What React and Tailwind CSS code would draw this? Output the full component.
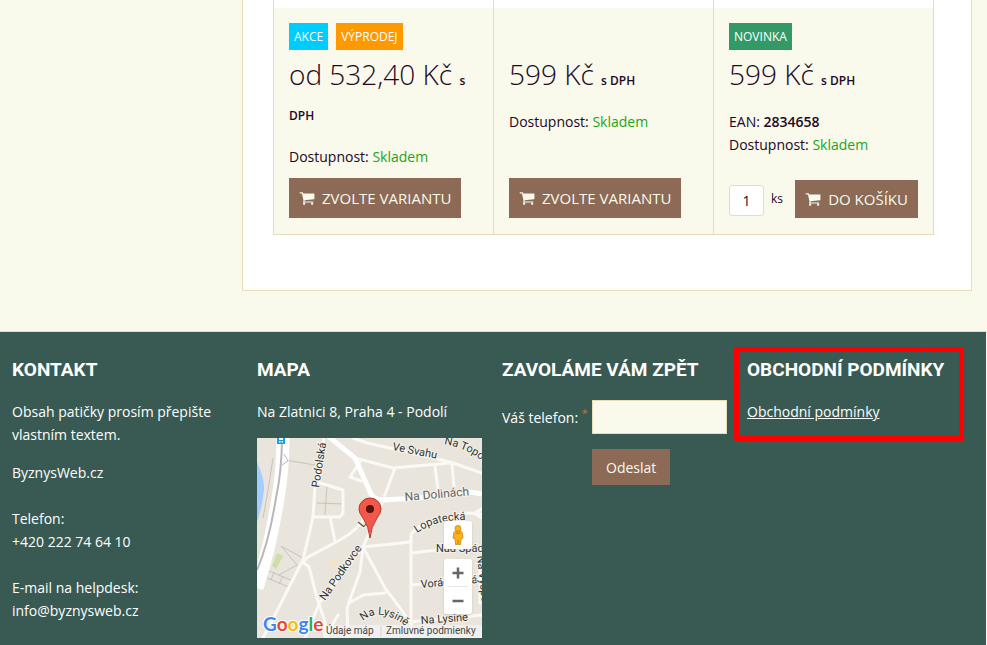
const products = [
  {
    id: 1,
    badges: [
      { label: 'AKCE', className: 'bg-[#00ccff]' },
      { label: 'VÝPRODEJ', className: 'bg-[#ff9900]' },
    ],
    price: 'od 532,40 Kč',
    hasVariants: true,
  },
  { id: 2, badges: [], price: '599 Kč', hasVariants: true },
  {
    id: 3,
    badges: [{ label: 'NOVINKA', className: 'bg-[#339966]' }],
    price: '599 Kč',
    ean: '2834658',
    hasVariants: false,
  },
]

const CartIcon = () => (
  <svg className="w-4 h-4 shrink-0" viewBox="0 0 1792 1792" fill="currentColor" aria-hidden="true">
    <path d="M704 1536q0 52-38 90t-90 38-90-38-38-90 38-90 90-38 90 38 38 90zm896 0q0 52-38 90t-90 38-90-38-38-90 38-90 90-38 90 38 38 90zm128-1088v512q0 24-16.500 42.500t-40.500 21.500l-1044 122q13 60 13 70 0 16-24 64h920q26 0 45 19t19 45-19 45-45 19h-1024q-26 0-45-19t-19-45q0-11 8-31.500t16-36 21.500-40 15.500-29.500l-177-823h-204q-26 0-45-19t-19-45 19-45 45-19h256q16 0 28.500 6.500t19.500 15.500 13 24.500 8 26 5.500 29.500 4.500 26h1201q26 0 45 19t19 45z" />
  </svg>
)

const ProductCard = ({ product }) => (
  <div className="flex flex-col border-r border-b border-[#e8dcb9] pt-2 bg-white">
    <div className="flex-1 flex flex-col bg-[#f9f9ec] px-[15px] pt-[15px] pb-4">
      <div className="flex gap-2 h-[27px] mb-[7px]">
        {product.badges.map((badge) => (
          <span key={badge.label} className={`px-[5px] text-xs leading-[27px] text-white ${badge.className}`}>
            {badge.label}
          </span>
        ))}
      </div>

      <p className="text-[28px] leading-[35px] font-light mb-[18px]">
        {product.price} <span className="text-xs font-semibold">s DPH</span>
      </p>

      <div className="mb-[10px]">
        {product.ean && (
          <p>
            EAN: <strong className="font-semibold">{product.ean}</strong>
          </p>
        )}
        <p>
          Dostupnost: <span className="text-[#1ba61b]">Skladem</span>
        </p>
      </div>

      {product.hasVariants ? (
        <button
          type="button"
          className="mt-auto self-start flex items-center gap-[7px] h-10 px-[10px] bg-[#8c6a56] text-[#f9f9ec] text-[15px]"
        >
          <CartIcon />
          ZVOLTE VARIANTU
        </button>
      ) : (
        <div className="mt-auto flex items-center justify-between">
          <label className="flex items-center gap-[7px] text-xs">
            <input
              type="text"
              defaultValue="1"
              className="w-[35px] h-[31px] mt-[3px] border border-[#e8dcb9] rounded-[3px] bg-white text-center text-sm"
            />
            ks
          </label>
          <button
            type="button"
            className="flex items-center gap-[7px] h-[38px] px-[10px] bg-[#8c6a56] text-[#f9f9ec] text-[15px]"
          >
            <CartIcon />
            DO KOŠÍKU
          </button>
        </div>
      )}
    </div>
  </div>
)

const MapView = () => (
  <div className="relative w-[225px] h-[200px] overflow-hidden bg-[#e9e5dc]">
    <svg className="w-full h-full" viewBox="0 0 225 200" fontFamily="Roboto, sans-serif">
      {/* Water and park */}
      <path d="M0 24Q8 42 7 52Q5 70 0 84z" fill="#a3ccff" />
      <path d="M15 128L20 115L26 118L19 131z" fill="#cadfaa" />
      <circle cx="77" cy="125" r="4" fill="#f3e4c8" />

      {/* Footpaths */}
      <g fill="none" stroke="#c9c4ba" strokeWidth="1">
        <path d="M28 22L58 27M24 10Q25 20 29 22Q34 25 24 33" />
        <path d="M60 65L86 66M70 48L68 77" />
        <path d="M24 108L40 127L22 137M24 108L46 120M12 133L36 143M10 140L32 149M17 134L14 142M26 138L22 146M36 143L32 149" />
        <path d="M16 20Q10 60 6 80" />
      </g>

      {/* Streets */}
      <g fill="none" stroke="#fbf9f5" strokeWidth="3" strokeLinejoin="round" strokeLinecap="round">
        <path d="M67 0L58 49L56 79L46 122L6 200" />
        <path d="M60 44L86 52L86 75L83 79L56 79M73 79L78 103" />
        <path d="M115 68Q105 90 83 102L51 119L46 124L52 129L60 160L68 184V200" />
        <path d="M96 0L110 5L133 10L173 19L196 25L225 35" />
        <path d="M98 20L136 30L193 25M103 24L93 39L104 43" />
        <path d="M138 30L126 62L106 109L63 164L48 200" />
        <path d="M178 28L181 52M195 25L197 49" />
        <path d="M106 109L153 104M106 109L128 150L143 170L153 184" />
        <path d="M106 109L103 134L90 170L91 200M92 165L106 157L128 155" />
        <path d="M154 200V96L160 90L180 82L210 75L225 76" />
        <path d="M217 75L225 71M217 75L225 80" />
        <path d="M155 115L180 112L225 110M155 147L225 140M153 184L225 177" />
        <path d="M81 177L68 200M223 120V165" />
      </g>
      <path
        d="M71 -2L98 20L114 56Q118 62 126 62L160 60L213 54L225 56"
        fill="none"
        stroke="#fff"
        strokeWidth="5"
      />
      <path d="M26 -2Q26 32 21 60Q14 106 0 150" fill="none" stroke="#fff" strokeWidth="13" />
      <path d="M25 -2Q25 32 19 60Q12 104 0 132" fill="none" stroke="#b8b8b8" strokeWidth="2" />
      <path d="M27 16L31 23L25 27" fill="none" stroke="#b8b8b8" strokeWidth="1" />

      {/* Transit stop */}
      <rect x="20" y="-2" width="8" height="8" fill="#1e9bdc" />
      <path d="M22 0h4v2h-4zM22 3h1.500v1.500h-1.500zM24.500 3h1.500v1.500h-1.500z" fill="#fff" />

      {/* Street names */}
      <defs>
        <path id="lopatecka" d="M160 95Q178 82 207 82" />
        <path id="lysina" d="M106 183Q123 168 150 189" />
        <path id="topolky" d="M187 6Q210 10 228 25" />
      </defs>
      <g fontSize="11" fill="#333" stroke="#f4f1ea" strokeWidth="2" paintOrder="stroke">
        <text transform="translate(62 50) rotate(-81)">Podolská</text>
        <text transform="translate(135 12) rotate(11)">Ve Svahu</text>
        <text>
          <textPath href="#topolky">Na Topol</textPath>
        </text>
        <text transform="translate(148 63) rotate(-5)" fontSize="12" fill="#666">
          Na Dolinách
        </text>
        <text transform="translate(106 90) rotate(-50)">L</text>
        <text>
          <textPath href="#lopatecka">Lopatecká</textPath>
        </text>
        <text transform="translate(68 163) rotate(-55)">Na Podkovce</text>
        <text x="179" y="114">Nad Spád</text>
        <text transform="translate(164 150) rotate(-5)">Voráčovská</text>
        <text transform="translate(220 118) rotate(84)">Na Výspě</text>
        <text>
          <textPath href="#lysina">Na Lysině</textPath>
        </text>
        <text transform="translate(164 186) rotate(-4)">Na Lysine</text>
      </g>

      {/* Attribution */}
      <rect x="68" y="187" width="157" height="13" fill="#f5f5f5" fillOpacity="0.7" />
      <path d="M124 188V199" stroke="#d5d5d5" />
      <g fontSize="10" fill="#444">
        <text x="69" y="196">Údaje máp</text>
        <text x="129" y="196">Zmluvné podmienky</text>
      </g>
      <text
        x="6"
        y="193"
        fontSize="19"
        fontWeight="700"
        fontFamily="Lato, sans-serif"
        stroke="#fff"
        strokeWidth="2"
        paintOrder="stroke"
      >
        <tspan fill="#4285f4">G</tspan>
        <tspan fill="#ea4335">o</tspan>
        <tspan fill="#fbbc05">o</tspan>
        <tspan fill="#4285f4">g</tspan>
        <tspan fill="#34a853">l</tspan>
        <tspan fill="#ea4335">e</tspan>
      </text>

      {/* Marker */}
      <path
        d="M113 100Q112 89 106 80Q102 75 102 71A11 11 0 0 1 124 71Q124 75 120 80Q114 89 113 100z"
        fill="#f2594b"
        stroke="#b8332a"
        strokeWidth="1"
      />
      <circle cx="113" cy="71" r="4" fill="#5c120c" />
    </svg>

    <div className="absolute right-[10px] top-[83px] flex flex-col gap-[10px] w-7">
      <button type="button" aria-label="Street View" className="h-7 rounded-[2px] bg-white shadow-sm flex justify-center items-center">
        <svg className="w-4 h-5" viewBox="0 0 16 20" aria-hidden="true">
          <path d="M4 7Q8 5 12 7L13 13L11 14L10.500 19.500H8.500L8 15L7.500 19.500H5.500L5 14L3 13z" fill="#fbb216" stroke="#c98712" strokeWidth="0.800" />
          <circle cx="8" cy="3.500" r="3" fill="#fbb216" stroke="#c98712" strokeWidth="0.800" />
          <path d="M6 7.500L8 9L10 7.500" fill="none" stroke="#c97a12" />
        </svg>
      </button>
      <div className="flex flex-col rounded-[2px] bg-white shadow-sm">
        <button type="button" aria-label="Přiblížit" className="h-[27px] flex justify-center items-center">
          <svg className="w-3 h-3" viewBox="0 0 12 12" stroke="#666" strokeWidth="2.500" aria-hidden="true">
            <path d="M6 0.500V11.500M0.500 6H11.500" />
          </svg>
        </button>
        <span className="h-px mx-1 bg-[#e6e6e6]" />
        <button type="button" aria-label="Oddálit" className="h-[27px] flex justify-center items-center">
          <svg className="w-3 h-3" viewBox="0 0 12 12" stroke="#666" strokeWidth="2.500" aria-hidden="true">
            <path d="M0.500 6H11.500" />
          </svg>
        </button>
      </div>
    </div>
  </div>
)

const FooterHeading = ({ children }) => (
  <h2 className="font-['Roboto'] text-[19px] leading-6 font-bold uppercase whitespace-nowrap mb-[18px]">{children}</h2>
)

const App = () => {
  return (
    <div className="min-h-screen flex flex-col pr-px bg-[#f9f9ec] font-['Open_Sans',sans-serif] text-sm leading-[23px] text-[#22071f]">
      <div className="flex pr-[14px] mb-10">
        <aside className="w-[242px] shrink-0" />
        <main className="flex-1 bg-white border border-t-0 border-[#e8dcb9] pl-[30px] pr-[37px] pb-[55px]">
          <div className="grid grid-cols-3 border-l border-[#e8dcb9]">
            {products.map((product) => (
              <ProductCard key={product.id} product={product} />
            ))}
          </div>
        </main>
      </div>

      <footer className="flex-1 border-t border-[#e8dcb9] bg-[#385a52] text-white">
        <div className="grid grid-cols-4 pr-[6px] pt-[26px]">
          <section className="pl-3">
            <FooterHeading>Kontakt</FooterHeading>
            <p className="mb-[15px]">
              Obsah patičky prosím přepište
              <br />
              vlastním textem.
            </p>
            <p className="mb-[23px]">ByznysWeb.cz</p>
            <p className="mb-[23px]">
              Telefon:
              <br />
              +420 222 74 64 10
            </p>
            <p>
              E-mail na helpdesk:
              <br />
              info@byznysweb.cz
            </p>
          </section>

          <section className="pl-3">
            <FooterHeading>Mapa</FooterHeading>
            <p className="mb-[15px]">Na Zlatnici 8, Praha 4 - Podolí</p>
            <MapView />
          </section>

          <section className="pl-3">
            <FooterHeading>Zavoláme vám zpět</FooterHeading>
            <form className="grid grid-cols-[90px_135px] items-center gap-y-[15px]">
              <label htmlFor="phone" className="whitespace-nowrap">
                Váš telefon: <sup className="text-[#e8650d]">*</sup>
              </label>
              <input id="phone" type="text" className="h-[34px] px-2 border border-[#e8dcb9] bg-[#f9f9ec] text-[#22071f]" />
              <button type="button" className="col-start-2 justify-self-start h-9 px-[14px] bg-[#8c6a56] text-[#f9f9ec]">
                Odeslat
              </button>
            </form>
          </section>

          <section className="relative self-start pl-3">
            <FooterHeading>Obchodní podmínky</FooterHeading>
            <a href="#" className="underline">
              Obchodní podmínky
            </a>
            <div className="absolute -top-[11px] -left-px right-[16px] -bottom-[18px] border-[5px] border-[#ff0000] rounded-[2px] pointer-events-none" />
          </section>
        </div>
      </footer>
    </div>
  )
}

export default App
